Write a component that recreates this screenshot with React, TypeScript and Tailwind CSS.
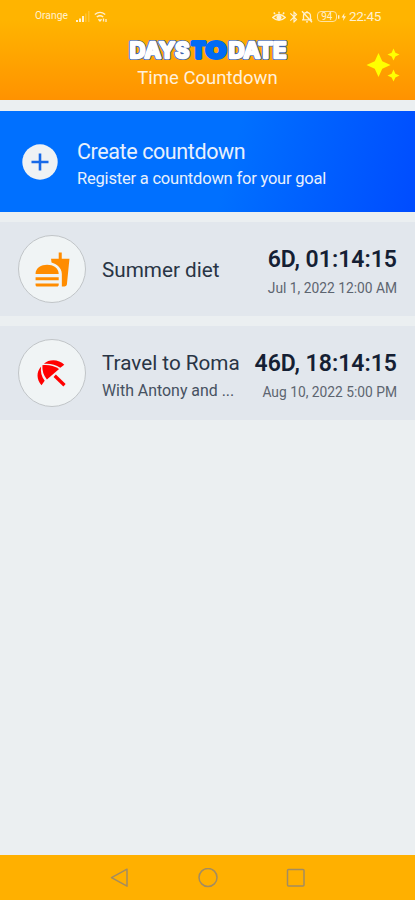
import type { ReactNode } from "react";
import { MdAutoAwesome, MdBluetooth, MdFastfood } from "react-icons/md";

interface Countdown {
  id: number;
  title: string;
  note?: string;
  remaining: string;
  date: string;
  icon: ReactNode;
}

function UmbrellaIcon() {
  return (
    <svg className="shrink-0" width="46" height="46" viewBox="-0.5 0 46 46" fill="#ff0000">
      <path d="M11.6 16.6C10.8 21.5 12 26.8 15.2 30.8L12 35.2C7 29.8 6.6 22 11.6 16.6Z" />
      <path d="M14.4 13.8C19.8 8.8 29.4 9.2 34.8 14.8L30.8 17.8C26 14.4 20 13.2 14.4 13.8Z" />
      <path d="M12.9 15.3C18.5 14.6 24.8 15.8 29.6 19L17.4 29.6C14 25.6 12.6 20.6 12.9 15.3Z" />
      <path d="M25.2 25.8L35 35.2" stroke="#ff0000" strokeWidth="3.3" />
    </svg>
  );
}

const COUNTDOWNS: Countdown[] = [
  {
    id: 1,
    title: "Summer diet",
    remaining: "6D, 01:14:15",
    date: "Jul 1, 2022 12:00 AM",
    icon: <MdFastfood className="h-[37px] w-[37px] text-[#ff8c00]" />,
  },
  {
    id: 2,
    title: "Travel to Roma",
    note: "With Antony and ...",
    remaining: "46D, 18:14:15",
    date: "Aug 10, 2022 5:00 PM",
    icon: <UmbrellaIcon />,
  },
];

function StatusBar() {
  return (
    <div className="flex h-[33px] items-center justify-between pr-[34px] pl-[35px] text-[#fff0cf]">
      <div className="flex items-center">
        <span className="w-[41px] text-[10.3px] leading-none whitespace-nowrap">Orange</span>
        <svg width="14" height="12" viewBox="0 0 14 12" fill="currentColor">
          <path d="M0 9h2v2H0zM3 7.5h2V11H3zM6 5h2v6H6z" />
          <path d="M9 2.5h1.5V11H9zM12 0h1.5v11H12z" opacity=".25" />
        </svg>
        <svg className="ml-1" width="14" height="12" viewBox="0 0 14 12" fill="none" stroke="currentColor" strokeWidth="1.4">
          <path d="M.8 3.5Q6 -.8 11.2 3.5M2.8 6Q6 3.4 9.2 6M4.5 8.2L6 10l1.5-1.8" />
          <path d="M9.5 7.5v3M12 8v3" strokeWidth="1.3" />
        </svg>
      </div>
      <div className="flex items-center">
        <svg className="mr-px" width="14" height="12" viewBox="0 0 14 12" fill="none" stroke="currentColor" strokeWidth="1.5">
          <path d="M.8 6.5Q7 .5 13.2 6.5Q7 12 .8 6.5ZM3 3L1.8 1.5M7 2.4V.8M11 3l1.2-1.5" />
          <circle cx="7" cy="6.5" r="1.8" fill="currentColor" />
        </svg>
        <MdBluetooth className="h-[14px] w-[14px]" />
        <svg width="12" height="13" viewBox="0 0 12 13" fill="none" stroke="currentColor" strokeWidth="1.3">
          <path d="M2.5 9.5V6a3.5 3.5 0 0 1 7 0v3.5M1 9.8h10M5 11.8h2M6 2.5V1M1 1.2l10 11" />
        </svg>
        <span className="ml-[4px] flex h-[11px] w-[20px] items-center justify-center rounded-[4px] border border-[#ffe2a0] text-[10px] leading-none">
          94
        </span>
        <svg className="ml-px" width="9" height="10" viewBox="0 0 9 10" fill="currentColor">
          <path d="M0 3.2h1.4v3.6H0zM6.5 1L3.5 5.5h2L5 9l3-4.7H6z" />
        </svg>
        <span className="ml-[2px] text-[13.5px] leading-none tracking-[-0.3px]">22:45</span>
      </div>
    </div>
  );
}

function Logo() {
  return (
    <svg
      className="block h-[26px] w-[168px]"
      viewBox="0 0 168 26"
      fontFamily="Inter, sans-serif"
      fontSize="21"
      fontWeight="700"
      strokeLinejoin="round"
    >
      <g stroke="#3f64ad" strokeWidth="4" fill="#3f64ad">
        <text x="5.5" y="21" textLength="60" lengthAdjust="spacingAndGlyphs">DAYS</text>
        <text x="104.5" y="21" textLength="58" lengthAdjust="spacingAndGlyphs">DATE</text>
      </g>
      <g stroke="#006bf5" strokeWidth="3.8" fill="#006bf5">
        <text x="67.5" y="21">T</text>
        <text x="82" y="21" textLength="20" lengthAdjust="spacingAndGlyphs">O</text>
      </g>
      <g stroke="#ffffff" strokeWidth="2.3" fill="#ffffff">
        <text x="5.5" y="21" textLength="60" lengthAdjust="spacingAndGlyphs">DAYS</text>
        <text x="104.5" y="21" textLength="58" lengthAdjust="spacingAndGlyphs">DATE</text>
      </g>
    </svg>
  );
}

function Header() {
  return (
    <header className="relative h-[100px] bg-linear-to-b from-[#ffb400] from-20% to-[#ff9200]">
      <StatusBar />
      <div className="flex flex-col items-center pt-[4px]">
        <Logo />
        <p className="mt-[3px] text-[18.5px] leading-[25px] text-[#fff0dc]">Time Countdown</p>
      </div>
      <MdAutoAwesome className="absolute top-[47px] right-[14px] h-[36px] w-[36px] text-[#ffff00]" />
    </header>
  );
}

function CreateButton() {
  return (
    <button
      type="button"
      className="flex h-[101px] w-full items-center bg-linear-[105deg] from-[#0070ff] from-55% to-[#004cff] pl-[22px] text-left text-[#e8f0fc]"
    >
      <svg width="36" height="36" viewBox="0 0 36 36">
        <circle cx="18" cy="18" r="17.7" fill="#eff2f4" />
        <path d="M18 9.5v17M9.5 18h17" stroke="#1769e8" strokeWidth="2.6" />
      </svg>
      <span className="ml-[19px] flex flex-col pt-[5px]">
        <span className="text-[21.5px] leading-[28px] tracking-[-0.4px] whitespace-nowrap">Create countdown</span>
        <span className="text-[16.5px] leading-[25px] tracking-[-0.2px] whitespace-nowrap">
          Register a countdown for your goal
        </span>
      </span>
    </button>
  );
}

function CountdownRow({ item }: { item: Countdown }) {
  return (
    <li className="flex h-[94px] items-center bg-[#e2e7ed] pr-[18px] pl-[18px] text-[#293545]">
      <div className="flex h-[68px] w-[68px] shrink-0 items-center justify-center rounded-full border border-[#c1c5c8] bg-[#f0f4f5]">
        {item.icon}
      </div>
      <div className={`ml-[16px] flex-1 whitespace-nowrap ${item.note ? "pt-[7px]" : "pt-[2px]"}`}>
        <p className="text-[20.7px] leading-[28px]">{item.title}</p>
        {item.note && <p className="text-[15.9px] leading-[27px] text-[#465161]">{item.note}</p>}
      </div>
      <div className="pt-[8px] text-right whitespace-nowrap">
        <p className="text-[23px] leading-[30px] font-semibold text-[#151f34]">{item.remaining}</p>
        <p className="text-[13.8px] leading-[27px] text-[#5d6570]">{item.date}</p>
      </div>
    </li>
  );
}

function NavigationBar() {
  return (
    <nav className="flex h-[45px] items-center justify-center gap-[68px] bg-[#ffb000] text-[#a38c60]">
      <svg width="20" height="20" viewBox="0 0 20 20" fill="none" stroke="currentColor" strokeWidth="1.5" strokeLinejoin="round">
        <path d="M17 1.2v17L1.5 9.7z" />
      </svg>
      <svg width="20" height="20" viewBox="0 0 20 20" fill="none" stroke="currentColor" strokeWidth="1.5">
        <circle cx="10" cy="9.5" r="9" />
      </svg>
      <svg width="20" height="20" viewBox="0 0 20 20" fill="none" stroke="currentColor" strokeWidth="1.5">
        <rect x="1.5" y="1.5" width="16.5" height="16.5" rx="1" />
      </svg>
    </nav>
  );
}

export default function App() {
  return (
    <div className="flex h-[900px] w-[415px] flex-col overflow-hidden bg-[#ebeff1] font-[Roboto,sans-serif]">
      <Header />
      <main className="flex-1 pt-[11px]">
        <CreateButton />
        <ul className="mt-[10px] flex flex-col gap-[10px]">
          {COUNTDOWNS.map((item) => (
            <CountdownRow key={item.id} item={item} />
          ))}
        </ul>
      </main>
      <NavigationBar />
    </div>
  );
}
